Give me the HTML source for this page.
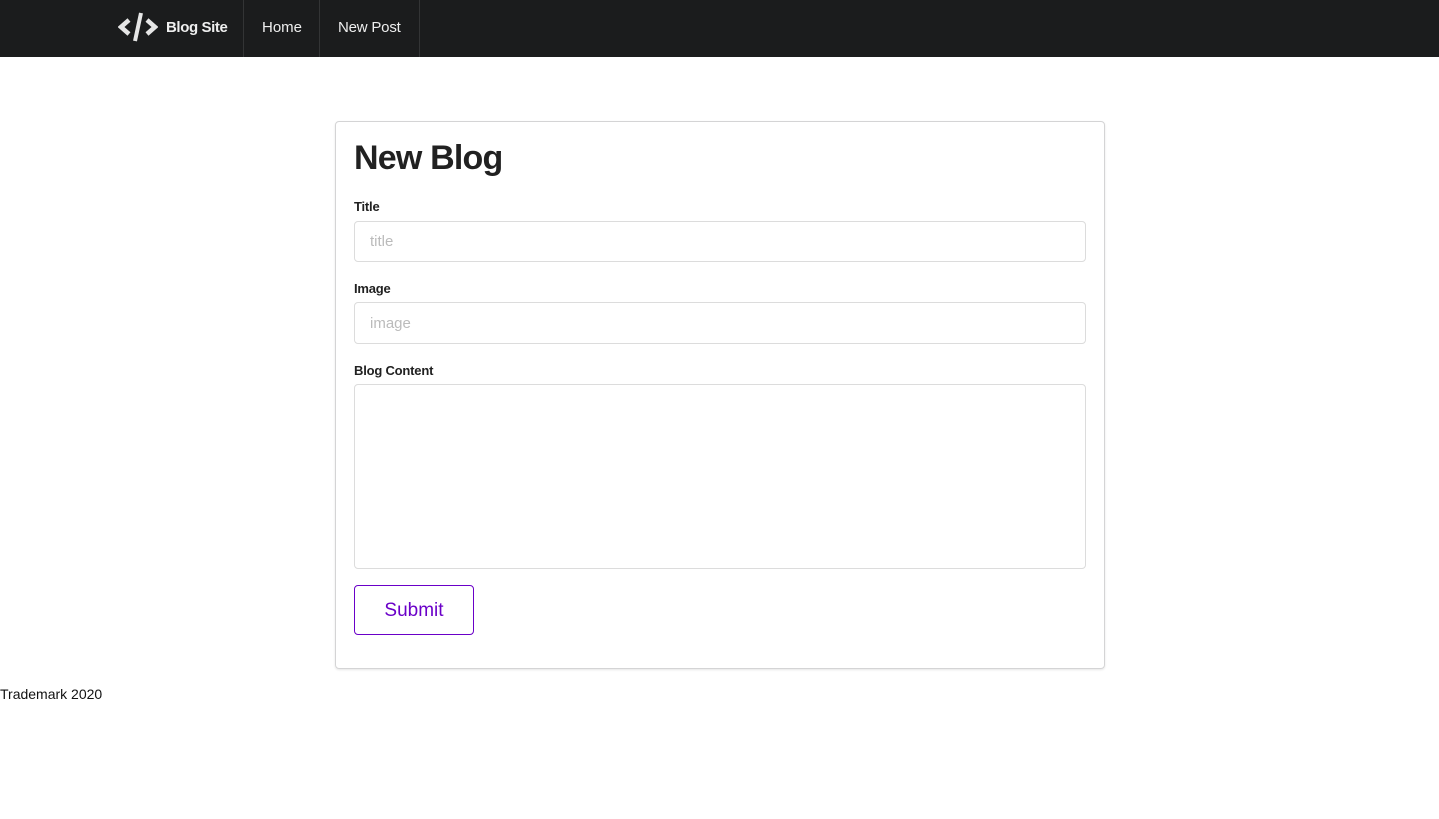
<!DOCTYPE html>
<html><head><meta charset="utf-8"><style>
*{box-sizing:border-box;margin:0;padding:0}
body{width:1439px;height:819px;background:#fff;font-family:"Liberation Sans",sans-serif;color:#212121;position:relative;overflow:hidden}
.nav{position:absolute;left:0;top:0;width:1439px;height:57px;background:#1b1c1d}
.div{position:absolute;top:0;width:1px;height:57px;background:#333435}
.nt{position:absolute;top:19px;color:#eee;font-size:15px}
.card{position:absolute;left:335px;top:121px;width:770px;height:548px;border:1px solid #d4d4d5;border-radius:4px;box-shadow:0 1px 2px rgba(0,0,0,.1)}
h1{position:absolute;left:354px;top:139px;font-size:34px;font-weight:bold;letter-spacing:-0.8px}
.lab{position:absolute;left:354px;font-size:13px;font-weight:bold;letter-spacing:-0.2px}
.in{position:absolute;left:354px;width:732px;border:1px solid #dcdcdc;border-radius:4px;color:#bbb;font-size:15px;padding-left:15px}
.btn{position:absolute;left:354px;top:585px;width:120px;height:50px;border:1px solid #6a00c8;border-radius:4px;color:#6a00c8;font-size:19px;text-align:center;line-height:50px}
</style></head><body>
<div class="nav">
<svg style="position:absolute;left:118px;top:12px" width="40" height="30" viewBox="0 0 40 30"><path d="M11 8 L3 15 L11 22" stroke="#e6e6e6" stroke-width="4.5" fill="none"/><path d="M29 8 L37 15 L29 22" stroke="#e6e6e6" stroke-width="4.5" fill="none"/><path d="M23 1 L17 29" stroke="#e6e6e6" stroke-width="4" fill="none"/></svg>
<div class="nt" style="left:166px;font-weight:bold;letter-spacing:-0.4px">Blog Site</div>
<div class="div" style="left:243px"></div>
<div class="nt" style="left:262px">Home</div>
<div class="div" style="left:319px"></div>
<div class="nt" style="left:338px;letter-spacing:-0.2px">New Post</div>
<div class="div" style="left:419px"></div>
</div>
<div class="card"></div>
<h1>New Blog</h1>
<div class="lab" style="top:199px">Title</div>
<div class="in" style="top:221px;height:41px;line-height:40px">title</div>
<div class="lab" style="top:281px">Image</div>
<div class="in" style="top:302px;height:42px;line-height:42px">image</div>
<div class="lab" style="top:363px">Blog Content</div>
<div class="in" style="top:384px;height:185px"></div>
<div class="btn">Submit</div>
<div style="position:absolute;left:0;top:686px;font-size:14px;color:#111">Trademark 2020</div>
</body></html>
